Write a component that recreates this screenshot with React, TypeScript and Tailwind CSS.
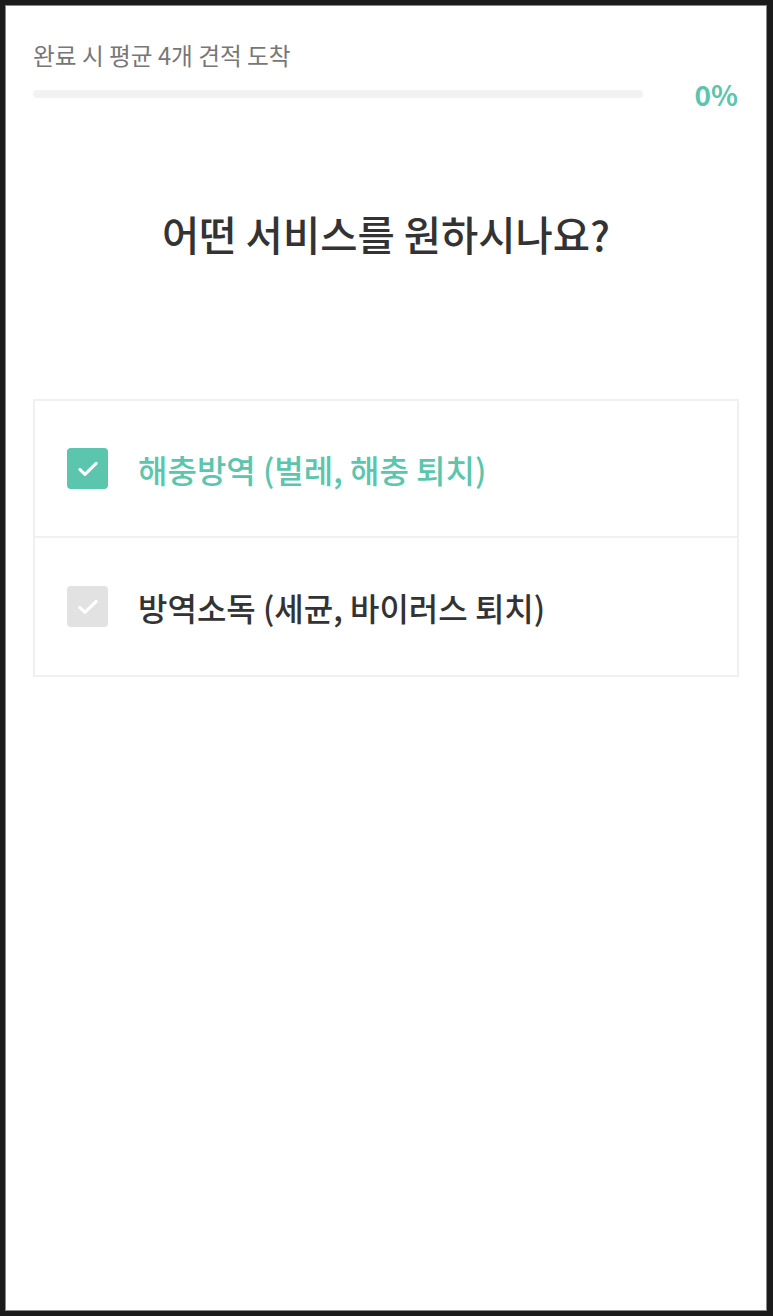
import React, { useState } from 'react';

const FONT = "font-['Noto_Sans_CJK_KR','Noto_Sans',sans-serif]";

interface Option {
  id: string;
  label: string;
}

const options: Option[] = [
  { id: 'pest', label: '해충방역 (벌레, 해충 퇴치)' },
  { id: 'disinfect', label: '방역소독 (세균, 바이러스 퇴치)' },
];

const CheckIcon = () => (
  <svg width="28" height="28" viewBox="0 0 24 24" fill="none">
    <path d="M5 12.4l4.4 4.2 9.6-9.4" stroke="#fff" strokeWidth="2.7" strokeLinecap="round" strokeLinejoin="round" />
  </svg>
);

export default function App() {
  const [selected, setSelected] = useState<string[]>(['pest']);
  const progress = 0;

  const toggle = (id: string) =>
    setSelected((s) => (s.includes(id) ? s.filter((x) => x !== id) : [...s, id]));

  return (
    <div className={`h-[1316px] w-full bg-[#1b1b1b] pt-[5px] pb-[5px] pl-[5px] pr-[6px] ${FONT}`}>
      <div className="h-full border border-[#8a8a8a] bg-white">
        <div className="px-[27px] pt-[34px]">
          {/* Progress header */}
          <p className="text-[23.7px] leading-[30px] text-[#777]">완료 시 평균 4개 견적 도착</p>
          <div className="mt-[7px] flex items-center">
            <div className="h-[8px] w-[610px] rounded-full bg-[#f2f2f2]">
              <div className="h-full rounded-full bg-[#5bc5ad]" style={{ width: `${progress}%` }} />
            </div>
            <span className="ml-auto mr-[1px] text-[28px] font-bold leading-[34px] text-[#5bc5ad]">{progress}%</span>
          </div>

          {/* Question */}
          <h1 className="mt-[95px] text-center text-[40.5px] font-medium leading-[56px] text-[#333]">
            어떤 서비스를 원하시나요?
          </h1>

          {/* Options */}
          <div className="mt-[137px] border-2 border-[#f0f0f0]">
            {options.map((o, i) => {
              const on = selected.includes(o.id);
              return (
                <button
                  key={o.id}
                  onClick={() => toggle(o.id)}
                  className={`flex w-full items-center pl-[32px] text-left ${i > 0 ? 'h-[139px] border-t-2 border-[#f0f0f0]' : 'h-[135px]'}`}
                >
                  <span
                    className={`flex h-[41px] w-[41px] items-center justify-center rounded-[4px] ${on ? 'bg-[#5bc5ad]' : 'bg-[#e2e2e2]'}`}
                  >
                    <CheckIcon />
                  </span>
                  <span className={`ml-[30px] text-[32px] font-medium ${on ? 'text-[#5bc5ad]' : 'text-[#333]'}`}>
                    {o.label}
                  </span>
                </button>
              );
            })}
          </div>
        </div>
      </div>
    </div>
  );
}
